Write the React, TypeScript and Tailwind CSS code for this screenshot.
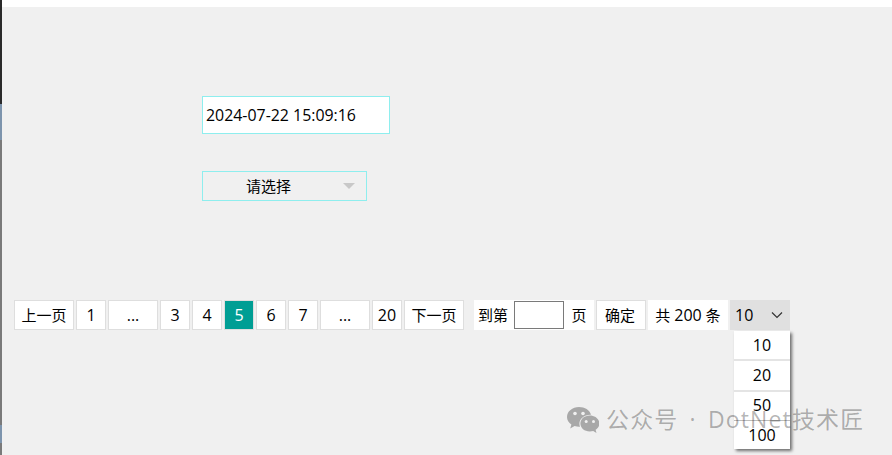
import React from 'react';

const font = "font-['Open_Sans','Noto_Sans_CJK_SC',sans-serif]";

const PageBtn = ({ label, wide, active, digits }: { label: React.ReactNode; wide?: 'md' | 'lg'; active?: boolean; digits?: boolean }) => (
  <div
    className={`flex h-[30px] items-center justify-center border border-[#dedede] ${digits ? 'text-[16px]' : 'text-[15px]'} ${
      wide === 'lg' ? 'w-[60px]' : wide === 'md' ? 'w-[50px]' : 'w-[30px]'
    } ${active ? 'bg-[#009e94] text-white' : 'bg-white text-black'}`}
  >
    {label}
  </div>
);

const WeChatIcon = () => (
  <svg width="32" height="26" viewBox="0 0 32 26" fill="#a8a8a8">
    <path d="M12 0C5.400 0 0 4.400 0 9.900c0 3.100 1.700 5.800 4.400 7.600L3.200 21.500l4.400-2.400c1.400.4 2.900.7 4.400.7h1c-.4-1-.6-2-.6-3.100 0-5 4.800-9 10.800-9h.8C22.700 3.100 17.800 0 12 0z" />
    <circle cx="8" cy="6.500" r="1.800" fill="#f0f0f0" />
    <circle cx="16" cy="6.500" r="1.800" fill="#f0f0f0" />
    <path d="M22.800 8.500C17.500 8.500 13.400 12.100 13.400 16.500s4.100 8 9.400 8c1.200 0 2.300-.2 3.400-.5l3.300 1.900-.9-3.100c2.300-1.500 3.800-3.700 3.800-6.300 0-4.400-4.300-8-9.600-8z" />
    <circle cx="19.200" cy="14.500" r="1.500" fill="#f0f0f0" />
    <circle cx="26.500" cy="14.500" r="1.500" fill="#f0f0f0" />
  </svg>
);

export default function App() {
  return (
    <div className={`relative h-[455px] w-[892px] overflow-hidden bg-[#f0f0f0] ${font}`}>
      <div className="h-[7px] bg-white" />

      {/* sliver of the window behind, at the very left edge */}
      <div className="absolute inset-y-0 left-0 flex w-[2px] flex-col">
        <div className="h-[104px] bg-[#2a2a2a]" />
        <div className="h-[36px] bg-[#7d94ad]" />
        <div className="h-[285px] bg-[#7a7a7a]" />
        <div className="h-[18px] bg-[#7d94ad]" />
        <div className="flex-1 bg-[#7a7a7a]" />
      </div>

      <div className="pl-[202px] pt-[89px]">
        <div className="flex h-[38px] w-[188px] items-center border border-[#8eeeee] bg-white pl-[3px] pt-[1px] text-[15.9px] text-black">
          2024-07-22 15:09:16
        </div>
        <div className="mt-[37px] flex h-[30px] w-[165px] items-center border border-[#8eeeee] text-[15px] text-black">
          <span className="w-[131px] text-center">请选择</span>
          <span className="ml-[9px] h-0 w-0 border-x-[6px] border-t-[6px] border-x-transparent border-t-[#c8c8c8]" />
        </div>
      </div>

      <div className="mt-[99px] flex pl-[14px] text-black">
        <div className="flex gap-[2px]">
          <PageBtn label="上一页" wide="lg" />
          <PageBtn label="1" digits />
          <PageBtn label="..." wide="md" digits />
          <PageBtn label="3" digits />
          <PageBtn label="4" digits />
          <PageBtn label="5" active digits />
          <PageBtn label="6" digits />
          <PageBtn label="7" digits />
          <PageBtn label="..." wide="md" digits />
          <PageBtn label="20" digits />
          <PageBtn label="下一页" wide="lg" />
        </div>
        <div className="ml-[10px] flex h-[30px] w-[120px] items-center bg-white text-[15px]">
          <span className="w-[40px] pr-[2px] text-center">到第</span>
          <div className="h-[28px] w-[50px] border border-[#7a7a7a] bg-white" />
          <span className="w-[30px] text-center">页</span>
        </div>
        <div className="ml-[2px] flex gap-[2px]">
          <PageBtn label={<span className="mr-[2px]">确定</span>} wide="md" />
          <div className="flex h-[30px] w-[80px] items-center justify-center bg-white text-[15px]">
            <span className="whitespace-pre">
              共 <span className="text-[16px]">200</span> 条
            </span>
          </div>
          <div className="flex h-[30px] w-[60px] items-center justify-between bg-[#e0e0e0] pl-[5px] pr-[5px] text-[16px]">
            10
            <svg width="14" height="14" viewBox="0 0 14 14" fill="none" stroke="#333" strokeWidth="1.2" className="mr-[1px]">
              <path d="M2 4.500 7 9.500 12 4.500" />
            </svg>
          </div>
        </div>
      </div>

      <div className="absolute left-[734px] top-[331px] w-[56px] bg-white text-center text-[16px] text-black shadow-[2px_2px_3px_rgba(0,0,0,0.55)]">
        <div className="flex h-[28px] items-center justify-center">10</div>
        <div className="flex h-[31px] items-center justify-center border-t-2 border-[#e4e4e4] pb-[1px]">20</div>
        <div className="flex h-[30px] items-center justify-center border-t-2 border-[#e4e4e4] pb-[2px]">50</div>
        <div className="flex h-[29px] items-center justify-center border-t border-[#bdbdbd]">100</div>
      </div>

      {/* watermark lies over the open dropdown */}
      <div className="absolute left-[567px] top-[407px] flex items-start gap-[7px] text-[23px] leading-[26px] tracking-[1.15px] text-black/30">
        <WeChatIcon />
        <span className="-mt-[1px] whitespace-pre">
          公众号<span className="mx-[4px]"> · </span>DotNet技术匠
        </span>
      </div>
    </div>
  );
}
